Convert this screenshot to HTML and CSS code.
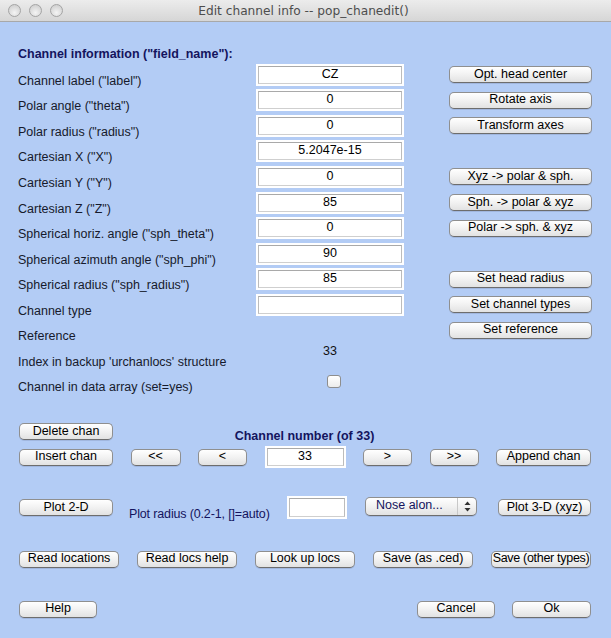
FILE: index.html
```html
<!DOCTYPE html>
<html>
<head>
<meta charset="utf-8">
<link rel="stylesheet" href="styles.css">
</head>
<body>
<div class="window">
  <div class="titlebar">
    <div class="lights"><span class="light"></span><span class="light"></span><span class="light"></span></div>
    <div class="title">Edit channel info -- pop_chanedit()</div>
  </div>
  <div class="content">
    <div class="heading">Channel information ("field_name"):</div>
    <div class="grid">
      <div class="lbl">Channel label ("label")</div>
      <div class="cell"><div class="field"><div class="field-in">CZ</div></div></div>
      <div class="cell side"><button class="btn wide">Opt. head center</button></div>

      <div class="lbl">Polar angle ("theta")</div>
      <div class="cell"><div class="field"><div class="field-in">0</div></div></div>
      <div class="cell side"><button class="btn wide">Rotate axis</button></div>

      <div class="lbl">Polar radius ("radius")</div>
      <div class="cell"><div class="field"><div class="field-in">0</div></div></div>
      <div class="cell side"><button class="btn wide">Transform axes</button></div>

      <div class="lbl">Cartesian X ("X")</div>
      <div class="cell"><div class="field"><div class="field-in">5.2047e-15</div></div></div>
      <div class="cell side"></div>

      <div class="lbl">Cartesian Y ("Y")</div>
      <div class="cell"><div class="field"><div class="field-in">0</div></div></div>
      <div class="cell side"><button class="btn wide">Xyz -&gt; polar &amp; sph.</button></div>

      <div class="lbl">Cartesian Z ("Z")</div>
      <div class="cell"><div class="field"><div class="field-in">85</div></div></div>
      <div class="cell side"><button class="btn wide">Sph. -&gt; polar &amp; xyz</button></div>

      <div class="lbl">Spherical horiz. angle ("sph_theta")</div>
      <div class="cell"><div class="field"><div class="field-in">0</div></div></div>
      <div class="cell side"><button class="btn wide">Polar -&gt; sph. &amp; xyz</button></div>

      <div class="lbl">Spherical azimuth angle ("sph_phi")</div>
      <div class="cell"><div class="field"><div class="field-in">90</div></div></div>
      <div class="cell side"></div>

      <div class="lbl">Spherical radius ("sph_radius")</div>
      <div class="cell"><div class="field"><div class="field-in">85</div></div></div>
      <div class="cell side"><button class="btn wide">Set head radius</button></div>

      <div class="lbl">Channel type</div>
      <div class="cell"><div class="field"><div class="field-in"></div></div></div>
      <div class="cell side"><button class="btn wide">Set channel types</button></div>

      <div class="lbl">Reference</div>
      <div class="cell"></div>
      <div class="cell side"><button class="btn wide">Set reference</button></div>

      <div class="lbl">Index in backup 'urchanlocs' structure</div>
      <div class="cell center"><span class="value">33</span></div>
      <div class="cell side"></div>

      <div class="lbl">Channel in data array (set=yes)</div>
      <div class="cell center"><span class="checkbox"></span></div>
      <div class="cell side"></div>
    </div>

    <div class="row row-a">
      <button class="btn w94">Delete chan</button>
      <div class="chnum">Channel number (of 33)</div>
      <div class="spacer"></div>
    </div>

    <div class="row row-b">
      <button class="btn w94">Insert chan</button>
      <button class="btn w50">&lt;&lt;</button>
      <button class="btn w49">&lt;</button>
      <div class="field w81"><div class="field-in">33</div></div>
      <button class="btn w49">&gt;</button>
      <button class="btn w49">&gt;&gt;</button>
      <button class="btn w95">Append chan</button>
    </div>

    <div class="row row-c">
      <button class="btn w94">Plot 2-D</button>
      <div class="plotlbl">Plot radius (0.2-1, []=auto)</div>
      <div class="field w60"><div class="field-in"></div></div>
      <div class="popup">
        <span class="popup-text">Nose alon...</span>
        <span class="popup-arrows">
          <svg width="7" height="11" viewBox="0 0 7 11"><path d="M3.5 0.5 L6.5 4 L0.5 4 Z" fill="#333"/><path d="M3.5 10.5 L6.5 7 L0.5 7 Z" fill="#333"/></svg>
        </span>
      </div>
      <button class="btn w93">Plot 3-D (xyz)</button>
    </div>

    <div class="row row-d">
      <button class="btn w100">Read locations</button>
      <button class="btn w100">Read locs help</button>
      <button class="btn w100">Look up locs</button>
      <button class="btn w100">Save (as .ced)</button>
      <button class="btn w100 tight">Save (other types)</button>
    </div>

    <div class="row row-e">
      <button class="btn w78">Help</button>
      <div class="grow"></div>
      <button class="btn w78">Cancel</button>
      <button class="btn w79 ok">Ok</button>
    </div>
  </div>
</div>
</body>
</html>
```

FILE: styles.css
```css
html, body {
  margin: 0;
  padding: 0;
  background: #b3ccf5;
}

.window {
  width: 611px;
  height: 638px;
  background: #b3ccf5;
  overflow: hidden;
  font-family: "Liberation Sans", Arial, sans-serif;
  font-size: 12.5px;
  color: #111;
}

.titlebar {
  position: relative;
  height: 22px;
  box-sizing: border-box;
  background: linear-gradient(#ececec, #d6d6d6);
  border-bottom: 1px solid #a8a8a8;
  display: flex;
  align-items: center;
  justify-content: center;
}

.lights {
  position: absolute;
  left: 8px;
  top: 4px;
  display: flex;
  gap: 8px;
}

.light {
  width: 13px;
  height: 13px;
  box-sizing: border-box;
  border-radius: 50%;
  border: 1px solid #a4a4a4;
  background: radial-gradient(circle at 50% 70%, #f4f4f4 0%, #dcdcdc 55%, #c8c8c8 100%);
}

.title {
  font-family: "DejaVu Sans", sans-serif;
  font-size: 12.2px;
  color: #4d4d4d;
  padding-top: 1px;
  padding-right: 4px;
}

.content {
  padding: 25px 0 0 0;
}

.heading {
  padding-left: 18px;
  font-weight: bold;
  color: #14145e;
  height: 15px;
  line-height: 15px;
}

.grid {
  display: grid;
  grid-template-columns: 238px 148px 188px;
  grid-template-rows: repeat(13, 25.56px);
  padding-left: 18px;
}

.lbl {
  display: flex;
  align-items: center;
  padding-top: 12px;
  white-space: nowrap;
  color: #161a2c;
}

.cell {
  display: flex;
  align-items: center;
}

.cell.side {
  padding-left: 45px;
}

.cell.center {
  justify-content: center;
}

.value {
  margin-bottom: 10px;
  color: #111;
}

.checkbox {
  width: 14px;
  height: 13px;
  box-sizing: border-box;
  border: 1px solid #8e8e8e;
  border-radius: 3px;
  background: linear-gradient(#ffffff, #ececec);
  margin-left: 7px;
}

.field {
  box-sizing: border-box;
  flex-shrink: 0;
  width: 148px;
  height: 22px;
  padding: 2px;
  background: #ffffff;
}

.field-in {
  box-sizing: border-box;
  height: 100%;
  border: 1px solid #cfcfcf;
  border-top-color: #a9a9a9;
  border-left-color: #bcbcbc;
  border-right-color: #bcbcbc;
  background: #fff;
  text-align: center;
  line-height: 15px;
  color: #000;
}

.btn {
  box-sizing: border-box;
  flex-shrink: 0;
  height: 17px;
  padding: 0 0 2px 0;
  margin: 0;
  border: 1px solid #8f8f8f;
  border-bottom-color: #6d6d6d;
  border-radius: 5px;
  background: linear-gradient(#ffffff 0%, #f3f3f3 45%, #e2e2e2 100%);
  font-family: "Liberation Sans", Arial, sans-serif;
  font-size: 12.5px;
  color: #000;
  display: flex;
  align-items: center;
  justify-content: center;
  white-space: nowrap;
  box-shadow: 0 1px 0 rgba(60, 70, 100, 0.15);
}

.btn.wide { width: 143px; }
.w94 { width: 94px; }
.w95 { width: 95px; }
.w93 { width: 93px; }
.w50 { width: 50px; }
.w49 { width: 49px; }
.w78 { width: 78px; }
.w79 { width: 79px; }
.w100 { width: 100px; }
.field.w81 { width: 81px; }
.field.w60 { width: 60px; }
.tight { letter-spacing: -0.3px; }

.row {
  display: flex;
  padding: 0 20px 0 19px;
}

.row-a {
  margin-top: 29px;
  height: 17px;
  align-items: flex-start;
}

.chnum {
  flex: 1;
  text-align: center;
  font-weight: bold;
  color: #14145e;
  line-height: 15px;
  margin-top: 6px;
}

.spacer {
  width: 95px;
}

.row-b {
  margin-top: 6px;
  height: 22px;
  align-items: center;
  justify-content: space-between;
}

.row-c {
  margin-top: 28px;
  height: 23px;
  align-items: center;
}

.plotlbl {
  width: 174px;
  flex-shrink: 0;
  box-sizing: border-box;
  padding-left: 16px;
  color: #14145e;
  white-space: nowrap;
  align-self: flex-end;
  line-height: 15px;
  margin-bottom: -3px;
  letter-spacing: -0.15px;
}

.row-c .field {
  height: 23px;
}

.popup {
  box-sizing: border-box;
  flex-shrink: 0;
  margin-left: 18px;
  width: 112px;
  height: 19px;
  border: 1px solid #8f8f8f;
  border-bottom-color: #6d6d6d;
  border-radius: 5px;
  background: linear-gradient(#ffffff 0%, #f3f3f3 45%, #e2e2e2 100%);
  display: flex;
  align-items: center;
  margin-top: -3px;
  box-shadow: 0 1px 0 rgba(60, 70, 100, 0.15);
}

.popup-text {
  flex: 1;
  padding-left: 10px;
  padding-bottom: 2px;
  color: #14145e;
}

.popup-arrows {
  width: 18px;
  height: 100%;
  border-left: 1px solid #c8c8c8;
  display: flex;
  align-items: center;
  justify-content: center;
}

.row-c .w93 {
  margin-left: 21px;
}

.row-d {
  margin-top: 31px;
  height: 18px;
  align-items: center;
  justify-content: space-between;
}

.row-e {
  margin-top: 32px;
  height: 18px;
  align-items: center;
}

.grow { flex: 1; }

.ok { margin-left: 17px; }
```
